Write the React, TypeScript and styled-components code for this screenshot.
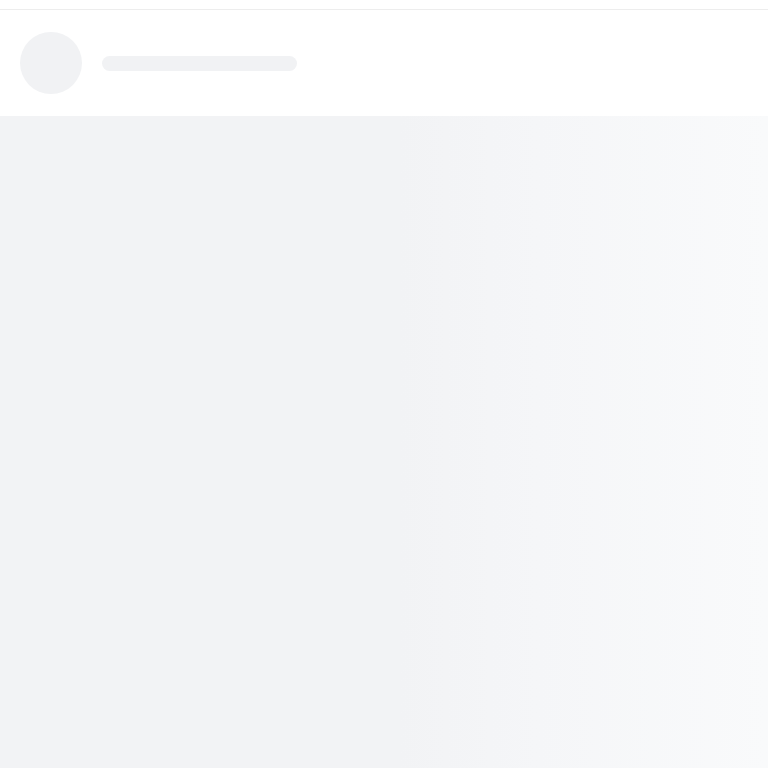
import { FC } from 'react';
import styled, { createGlobalStyle } from 'styled-components';

const GlobalStyle = createGlobalStyle`
  html, body {
    margin: 0;
    padding: 0;
    height: 100%;
    background: #ffffff;
    font-family: 'Inter', 'Liberation Sans', sans-serif;
  }

  #root {
    height: 100%;
  }
`;

const App: FC = (): JSX.Element => {
  return (
    <>
      <GlobalStyle />
      <Page>
        <TopBar />
        <Header>
          <Avatar />
          <TitleLine />
        </Header>
        <Body />
      </Page>
    </>
  );
};

const Page = styled.div`
  display: flex;
  flex-direction: column;
  height: 100vh;
  overflow: hidden;
`;

const TopBar = styled.div`
  height: 9px;
  flex-shrink: 0;
  border-bottom: 1px solid #ededed;
  background: #ffffff;
`;

const Header = styled.header`
  display: flex;
  align-items: center;
  gap: 20px;
  height: 106px;
  padding: 0 20px;
  flex-shrink: 0;
  background: #ffffff;
`;

const Avatar = styled.div`
  width: 62px;
  height: 62px;
  border-radius: 50%;
  background: #f1f2f4;
`;

const TitleLine = styled.div`
  width: 195px;
  height: 15px;
  border-radius: 8px;
  background: #f1f2f4;
`;

const Body = styled.main`
  flex: 1;
  background: linear-gradient(
    90deg,
    #f2f3f5 0%,
    #f2f3f5 52%,
    #f5f6f8 70%,
    #f9fafb 100%
  );
`;

export default App;
